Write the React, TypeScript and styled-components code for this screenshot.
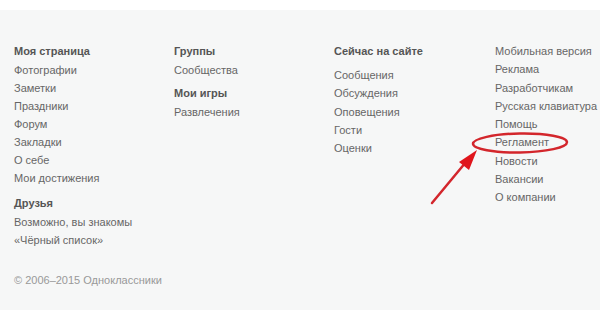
import React from "react";
import styled, { createGlobalStyle } from "styled-components";

const Global = createGlobalStyle`
  html, body { margin: 0; padding: 0; background: #ffffff; }
  body { font-family: "Liberation Sans", Arial, sans-serif; }
`;

const Page = styled.div`
  position: relative;
  width: 600px;
  height: 310px;
  padding-top: 10px;
  box-sizing: border-box;
  overflow: hidden;
`;

const Footer = styled.footer`
  background: #f6f7f7;
  height: 300px;
  padding: 32px 0 0 14px;
  box-sizing: border-box;
`;

const Columns = styled.div`
  display: grid;
  grid-template-columns: 160px 160px 161px 160px;
`;

const Column = styled.div<{ $lineHeight?: number }>`
  display: flex;
  flex-direction: column;
  --row-h: ${(p) => p.$lineHeight ?? 18}px;
`;

const Heading = styled.div<{ $gapTop?: number; $gapBottom?: number }>`
  font-size: 11px;
  line-height: 18px;
  font-weight: bold;
  color: #555555;
  margin-top: ${(p) => p.$gapTop ?? 0}px;
  margin-bottom: ${(p) => p.$gapBottom ?? 1}px;
  white-space: nowrap;
`;

const Link = styled.a`
  font-size: 11px;
  line-height: var(--row-h);
  color: #666666;
  text-decoration: none;
  white-space: nowrap;
`;

const Copyright = styled.div`
  margin-top: 22px;
  font-size: 11px;
  line-height: 18px;
  color: #999999;
`;

const Annotation = styled.svg`
  position: absolute;
  left: 0;
  top: 0;
  pointer-events: none;
`;

export default function App() {
  return (
    <>
      <Global />
      <Page>
        <Footer>
          <Columns>
            <Column>
              <Heading>Моя страница</Heading>
              <Link>Фотографии</Link>
              <Link>Заметки</Link>
              <Link>Праздники</Link>
              <Link>Форум</Link>
              <Link>Закладки</Link>
              <Link>О себе</Link>
              <Link>Мои достижения</Link>
              <Heading $gapTop={7}>Друзья</Heading>
              <Link>Возможно, вы знакомы</Link>
              <Link>«Чёрный список»</Link>
            </Column>
            <Column>
              <Heading>Группы</Heading>
              <Link>Сообщества</Link>
              <Heading $gapTop={5}>Мои игры</Heading>
              <Link>Развлечения</Link>
            </Column>
            <Column $lineHeight={18.25}>
              <Heading $gapBottom={6}>Сейчас на сайте</Heading>
              <Link>Сообщения</Link>
              <Link>Обсуждения</Link>
              <Link>Оповещения</Link>
              <Link>Гости</Link>
              <Link>Оценки</Link>
            </Column>
            <Column $lineHeight={18.25}>
              <Link>Мобильная версия</Link>
              <Link>Реклама</Link>
              <Link>Разработчикам</Link>
              <Link>Русская клавиатура</Link>
              <Link>Помощь</Link>
              <Link>Регламент</Link>
              <Link>Новости</Link>
              <Link>Вакансии</Link>
              <Link>О компании</Link>
            </Column>
          </Columns>
          <Copyright>© 2006–2015 Одноклассники</Copyright>
        </Footer>
        <Annotation width="600" height="310" viewBox="0 0 600 310">
          <ellipse
            cx="520"
            cy="143"
            rx="47"
            ry="9.5"
            fill="none"
            stroke="#d3262c"
            strokeWidth="2.5"
            transform="rotate(-1 520 143)"
          />
          <line
            x1="432"
            y1="203"
            x2="466"
            y2="162"
            stroke="#d3262c"
            strokeWidth="2.5"
            strokeLinecap="round"
          />
          <polygon points="477,150 459,162 469,170" fill="#e0151c" />
        </Annotation>
      </Page>
    </>
  );
}
